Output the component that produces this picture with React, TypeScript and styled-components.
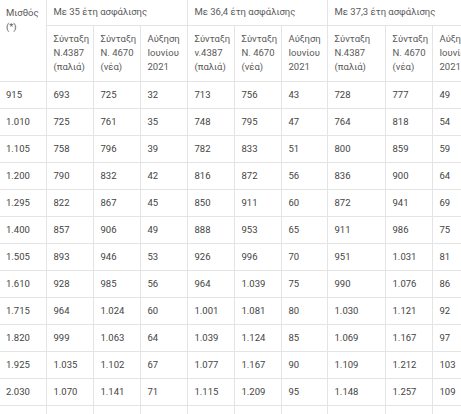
import React from 'react';
import styled, { createGlobalStyle } from 'styled-components';

const GlobalStyle = createGlobalStyle`
  html, body {
    margin: 0;
    padding: 0;
    background: #ffffff;
  }
  body {
    font-family: Roboto, "Liberation Sans", Arial, sans-serif;
    overflow: hidden;
  }
`;

type Group = {
  title: string;
  cols: string[][];
};

const groups: Group[] = [
  {
    title: 'Με 35 έτη ασφάλισης',
    cols: [
      ['Σύνταξη', 'Ν.4387', '(παλιά)'],
      ['Σύνταξη', 'Ν. 4670', '(νέα)'],
      ['Αύξηση', 'Ιουνίου', '2021'],
    ],
  },
  {
    title: 'Με 36,4 έτη ασφάλισης',
    cols: [
      ['Σύνταξη', 'ν.4387', '(παλιά)'],
      ['Σύνταξη', 'Ν. 4670', '(νέα)'],
      ['Αύξηση', 'Ιουνίου', '2021'],
    ],
  },
  {
    title: 'Με 37,3 έτη ασφάλισης',
    cols: [
      ['Σύνταξη', 'Ν.4387', '(παλιά)'],
      ['Σύνταξη', 'Ν. 4670', '(νέα)'],
      ['Αύξηση', 'Ιουνίου', '2021'],
    ],
  },
];

const colWidths = [46, 47, 47, 47, 47, 47, 46, 58, 47, 47];

const rows: string[][] = [
  ['915', '693', '725', '32', '713', '756', '43', '728', '777', '49'],
  ['1.010', '725', '761', '35', '748', '795', '47', '764', '818', '54'],
  ['1.105', '758', '796', '39', '782', '833', '51', '800', '859', '59'],
  ['1.200', '790', '832', '42', '816', '872', '56', '836', '900', '64'],
  ['1.295', '822', '867', '45', '850', '911', '60', '872', '941', '69'],
  ['1.400', '857', '906', '49', '888', '953', '65', '911', '986', '75'],
  ['1.505', '893', '946', '53', '926', '996', '70', '951', '1.031', '81'],
  ['1.610', '928', '985', '56', '964', '1.039', '75', '990', '1.076', '86'],
  ['1.715', '964', '1.024', '60', '1.001', '1.081', '80', '1.030', '1.121', '92'],
  ['1.820', '999', '1.063', '64', '1.039', '1.124', '85', '1.069', '1.167', '97'],
  ['1.925', '1.035', '1.102', '67', '1.077', '1.167', '90', '1.109', '1.212', '103'],
  ['2.030', '1.070', '1.141', '71', '1.115', '1.209', '95', '1.148', '1.257', '109'],
  ['', '', '', '', '', '', '', '', '', ''],
];

const App: React.FC = () => {
  return (
    <>
      <GlobalStyle />
      <Viewport>
        <Table>
          <colgroup>
            {colWidths.map((w, i) => (
              <col key={i} style={{ width: w }} />
            ))}
          </colgroup>
          <thead>
            <GroupRow>
              <CornerCell rowSpan={2}>
                Μισθός
                <br />
                (*)
              </CornerCell>
              {groups.map((g) => (
                <GroupCell key={g.title} colSpan={3}>
                  {g.title}
                </GroupCell>
              ))}
            </GroupRow>
            <SubRow>
              {groups.flatMap((g, gi) =>
                g.cols.map((lines, ci) => (
                  <SubCell key={`${gi}-${ci}`}>
                    {lines.map((l, li) => (
                      <Line key={li}>{l}</Line>
                    ))}
                  </SubCell>
                ))
              )}
            </SubRow>
          </thead>
          <tbody>
            {rows.map((row, ri) => (
              <DataRow key={ri}>
                {row.map((v, ci) => (
                  <Cell key={ci} $first={ci === 0}>
                    {v}
                  </Cell>
                ))}
              </DataRow>
            ))}
          </tbody>
        </Table>
      </Viewport>
    </>
  );
};

const Viewport = styled.div`
  width: 461px;
  height: 414px;
  overflow: hidden;
`;

const Table = styled.table`
  border-collapse: collapse;
  table-layout: fixed;
  width: 479px;
  font-size: 9.5px;
  line-height: 14px;
  color: #505050;
`;

const GroupRow = styled.tr`
  height: 25px;
`;

const SubRow = styled.tr`
  height: 56px;
`;

const DataRow = styled.tr`
  height: 27px;
`;

const CornerCell = styled.th`
  text-align: left;
  font-weight: normal;
  vertical-align: top;
  padding: 6px 6px;
  border-right: 1px solid #e4e4e4;
  border-bottom: 1px solid #e4e4e4;
  color: #5a5a5a;
`;

const GroupCell = styled.th`
  text-align: left;
  font-weight: normal;
  vertical-align: middle;
  padding: 0 7px;
  white-space: nowrap;
  border-left: 1px solid #e4e4e4;
  border-bottom: 1px solid #e4e4e4;
  color: #5a5a5a;
`;

const SubCell = styled.th`
  text-align: left;
  font-weight: normal;
  vertical-align: middle;
  padding: 0 7px;
  white-space: nowrap;
  border-left: 1px solid #e4e4e4;
  border-bottom: 1px solid #e4e4e4;
  color: #5a5a5a;
`;

const Line = styled.div`
  display: block;
`;

const Cell = styled.td<{ $first?: boolean }>`
  text-align: left;
  vertical-align: middle;
  padding: 0 ${(p) => (p.$first ? '6px' : '7px')};
  white-space: nowrap;
  border-left: ${(p) => (p.$first ? 'none' : '1px solid #e4e4e4')};
  border-bottom: 1px solid #e4e4e4;
  color: #444444;
`;

export default App;
